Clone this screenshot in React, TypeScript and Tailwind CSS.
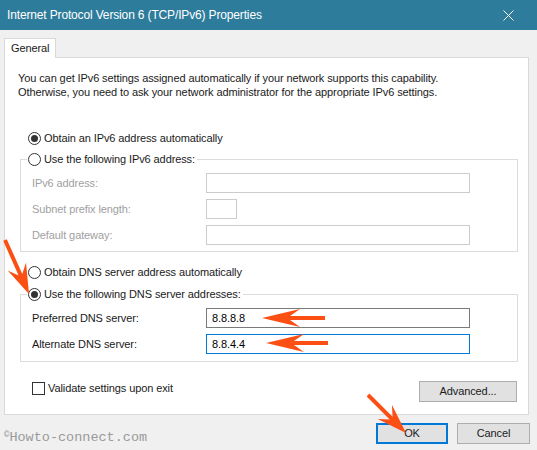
import React from "react";

const FONT = { fontFamily: '"Liberation Sans", Arial, sans-serif' };

function Radio({ checked }: { checked?: boolean }) {
  return (
    <span className="flex h-[13px] w-[13px] shrink-0 items-center justify-center rounded-full border border-[#333333] bg-white">
      {checked && <span className="block h-[7px] w-[7px] rounded-full bg-[#333333]" />}
    </span>
  );
}

function arrow(tx: number, ty: number, hx: number, hy: number, headLen = 30, headW = 10, notch = 9, shaft = 2) {
  const dx = hx - tx;
  const dy = hy - ty;
  const L = Math.hypot(dx, dy);
  const ux = dx / L;
  const uy = dy / L;
  const nx = -uy;
  const ny = ux;
  const p = (a: number, b: number) => `${a.toFixed(1)},${b.toFixed(1)}`;
  const bx = hx - ux * headLen;
  const by = hy - uy * headLen;
  const cx = hx - ux * (headLen - notch);
  const cy = hy - uy * (headLen - notch);
  return [
    p(hx, hy),
    p(bx + nx * headW, by + ny * headW),
    p(cx + nx * shaft, cy + ny * shaft),
    p(tx + nx * shaft, ty + ny * shaft),
    p(tx - nx * shaft, ty - ny * shaft),
    p(cx - nx * shaft, cy - ny * shaft),
    p(bx - nx * headW, by - ny * headW),
  ].join(" ");
}

function Row({ label, wide = true, disabled, value, focus }: { label: string; wide?: boolean; disabled?: boolean; value?: string; focus?: boolean }) {
  return (
    <div className="flex h-[20px] items-center pl-[5px]">
      <span className={`w-[174px] text-[11px] ${disabled ? "text-[#a0a0a0]" : "text-[#1a1a1a]"}`}>{label}</span>
      <div
        className={`flex h-[20px] items-center bg-white px-[5px] text-[11px] text-black ${wide ? "w-[264px]" : "w-[31px]"} border ${
          disabled ? "border-[#cccccc]" : focus ? "border-[#0078d7]" : "border-[#7a7a7a]"
        }`}
      >
        {value}
      </div>
    </div>
  );
}

export default function App() {
  return (
    <div className="relative h-[450px] w-[537px] overflow-hidden bg-[#f0f0f0] text-[11px] tracking-[-0.1px] text-[#1a1a1a]" style={FONT}>
      {/* Title bar */}
      <div className="flex h-[30px] items-center justify-between bg-[#2e7c9b] pl-[7px] pr-[23px] text-[12px] tracking-[-0.15px] text-white">
        <span>Internet Protocol Version 6 (TCP/IPv6) Properties</span>
        <svg width="11" height="11" viewBox="0 0 11 11">
          <path d="M0.5 0.5 L10.5 10.5 M10.5 0.5 L0.5 10.5" stroke="white" strokeWidth="1" />
        </svg>
      </div>

      {/* Tabs */}
      <div className="ml-[4px] mt-[8px] flex">
        <div className="relative z-10 -mb-px flex h-[20px] w-[52px] items-center border border-b-0 border-[#d9d9d9] bg-white pl-[6px] text-[11px]">
          General
        </div>
      </div>

      {/* Panel */}
      <div className="ml-[4px] flex h-[358px] w-[525px] flex-col border border-[#d9d9d9] bg-white">
        <p className="pl-[13px] pt-[13px] text-[11px] leading-[14px]">
          You can get IPv6 settings assigned automatically if your network supports this capability.
          <br />
          Otherwise, you need to ask your network administrator for the appropriate IPv6 settings.
        </p>

        <div className="mt-[32px] flex h-[15px] items-center gap-[3px] pl-[23px]">
          <Radio checked />
          <span>Obtain an IPv6 address automatically</span>
        </div>

        <fieldset className="ml-[15px] mr-[10px] mt-[6px] border border-[#dcdcdc] px-[6px] pb-[6px]">
          <legend className="px-[1px]">
            <span className="flex h-[15px] items-center gap-[3px] pr-[1px]">
              <Radio />
              <span>Use the following IPv6 address:</span>
            </span>
          </legend>
          <div className="mt-[6px] flex flex-col gap-[6px]">
            <Row label="IPv6 address:" disabled />
            <Row label="Subnet prefix length:" disabled wide={false} />
            <Row label="Default gateway:" disabled />
          </div>
        </fieldset>

        <div className="mt-[13px] flex h-[15px] items-center gap-[3px] pl-[23px]">
          <Radio />
          <span>Obtain DNS server address automatically</span>
        </div>

        <fieldset className="ml-[15px] mr-[10px] mt-[7px] border border-[#dcdcdc] px-[6px] pb-[7px]">
          <legend className="px-[1px]">
            <span className="flex h-[15px] items-center gap-[3px] pr-[1px]">
              <Radio checked />
              <span>Use the following DNS server addresses:</span>
            </span>
          </legend>
          <div className="mt-[6px] flex flex-col gap-[6px]">
            <Row label="Preferred DNS server:" value="8.8.8.8" />
            <Row label="Alternate DNS server:" value="8.8.4.4" focus />
          </div>
        </fieldset>

        <div className="mt-[18px] flex items-start justify-between pl-[27px] pr-[11px]">
          <div className="flex items-center gap-[3px]">
            <span className="block h-[13px] w-[13px] border border-[#333333] bg-white" />
            <span>Validate settings upon exit</span>
          </div>
          <button className="mt-px flex h-[21px] w-[98px] items-center justify-center border border-[#adadad] bg-[#e1e1e1] text-[11px]">
            Advanced...
          </button>
        </div>
      </div>

      {/* Footer */}
      <div className="flex items-start justify-between pl-[4px] pr-[7px] pt-[8px]">
        <span
          className="mt-[5px] text-[13.5px] tracking-normal text-[#9a9a9a]"
          style={{ fontFamily: '"Liberation Mono", "Courier New", monospace' }}
        >
          <span className="relative -top-[4px] text-[9px]">©</span>Howto-connect.com
        </span>
        <div className="flex gap-[9px]">
          <button className="flex h-[21px] w-[72px] items-center justify-center border-2 border-[#0078d7] bg-[#e1e1e1] text-[11px]">
            OK
          </button>
          <button className="flex h-[21px] w-[73px] items-center justify-center border border-[#adadad] bg-[#e1e1e1] text-[11px]">
            Cancel
          </button>
        </div>
      </div>

      {/* Annotation arrows */}
      <svg className="pointer-events-none absolute left-0 top-0" width="537" height="450">
        <g fill="#fb4f14">
          <polygon points={arrow(5, 240, 29, 294, 30, 10, 9, 2)} />
          <polygon points={arrow(325, 318, 262, 318, 38, 9, 10, 2)} />
          <polygon points={arrow(328, 343, 266, 343, 38, 9, 10, 2)} />
          <polygon points={arrow(368, 395, 406, 433, 30, 10, 9, 2)} />
        </g>
      </svg>
    </div>
  );
}
